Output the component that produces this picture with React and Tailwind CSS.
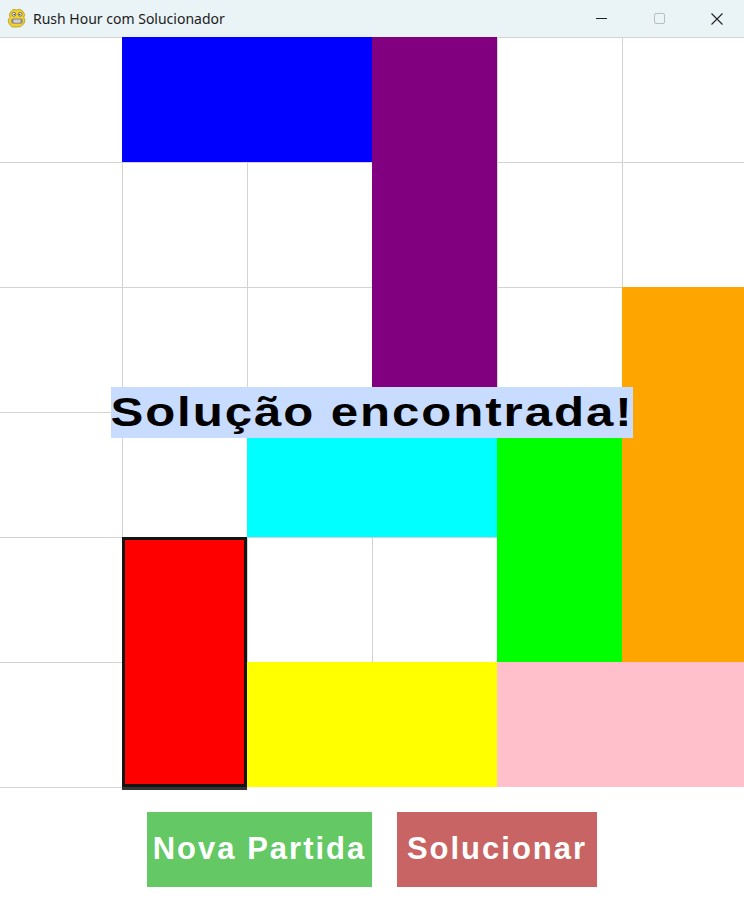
import React from "react";

// board pieces, placed on a 6x6 grid (125px cells)
const pieces = [
  { id: "blue", cls: "col-start-2 col-span-2 row-start-1 bg-[#0000ff]" },
  { id: "purple", cls: "col-start-4 row-start-1 row-span-3 bg-[#800080]" },
  { id: "orange", cls: "col-start-6 row-start-3 row-span-3 bg-[#ffa500]" },
  { id: "cyan", cls: "col-start-3 col-span-2 row-start-4 bg-[#00ffff]" },
  { id: "green", cls: "col-start-5 row-start-4 row-span-2 bg-[#00ff00]" },
  { id: "red", cls: "col-start-2 row-start-5 row-span-2 bg-[#ff0000] border-[3px] border-[#141414]" },
  { id: "yellow", cls: "col-start-3 col-span-2 row-start-6 bg-[#ffff00]" },
  { id: "pink", cls: "col-start-5 col-span-2 row-start-6 bg-[#ffc0cb]" },
];

// 36 cells minus 18 covered by pieces
const emptyCells = Array.from({ length: 18 }, (_, i) => i);

const PygameIcon = () => (
  <svg width="20" height="21" viewBox="0 0 19 20">
    <path d="M4 3 Q6 0 9 2 Q12 0 15 3 Q18 6 16 9 Q18 12 16 15 Q13 19 9 18 Q4 19 2 15 Q0 11 3 9 Q1 6 4 3Z" fill="#f2d233" stroke="#b89a10" strokeWidth="0.8" />
    <circle cx="6.5" cy="6" r="1.8" fill="#fff" stroke="#333" strokeWidth="0.6" />
    <circle cx="12.5" cy="6" r="1.8" fill="#fff" stroke="#333" strokeWidth="0.6" />
    <circle cx="6.8" cy="6.2" r="0.7" fill="#222" />
    <circle cx="12.2" cy="6.2" r="0.7" fill="#222" />
    <rect x="4" y="10" width="11" height="5" rx="2" fill="#8a8a8a" />
    <rect x="6" y="11" width="7" height="3" rx="1" fill="#cfcfcf" />
  </svg>
);

const TitleBar = () => (
  <div className="h-[37px] flex items-center bg-[#eaf3f6] font-['Noto_Sans','Open_Sans',sans-serif]">
    <div className="ml-[7px] mt-[-1px]">
      <PygameIcon />
    </div>
    <span className="ml-[6px] text-[14px] text-[#1b1b1b] mt-[-1px]">Rush Hour com Solucionador</span>
    <div className="ml-auto mr-[-2px] flex h-full">
      <div className="w-[58px] flex items-center justify-center">
        <div className="w-[11px] h-px bg-[#222]" />
      </div>
      <div className="w-[58px] flex items-center justify-center">
        <div className="w-[11px] h-[11px] border border-[#bdbdbd] rounded-[2px]" />
      </div>
      <div className="w-[58px] flex items-center justify-center">
        <svg width="12" height="12" viewBox="0 0 12 12">
          <path d="M0.5 0.5 L11.5 11.5 M11.5 0.5 L0.5 11.5" stroke="#222" strokeWidth="1.1" />
        </svg>
      </div>
    </div>
  </div>
);

const Board = () => (
  <div className="relative w-[750px] ml-[-3px]">
    <div className="grid grid-cols-[repeat(6,125px)] grid-rows-[repeat(6,125px)]">
      {pieces.map((p) => (
        <div key={p.id} className={p.cls} />
      ))}
      {emptyCells.map((i) => (
        <div key={i} className="border-l border-t border-[#d3d3d3] bg-white" />
      ))}
    </div>
    {/* message over the board */}
    <div className="absolute inset-0 flex items-center justify-center pointer-events-none">
      <div className="bg-[#c8dcff] h-[51px] w-[522px] flex items-center justify-center overflow-hidden">
        <span className="inline-block scale-x-[1.2] font-['Liberation_Sans',Arial,sans-serif] font-bold text-[41px] tracking-[1.6px] text-black leading-none whitespace-nowrap">
          Solução encontrada!
        </span>
      </div>
    </div>
  </div>
);

export default function App() {
  return (
    <div className="w-[744px] h-[908px] overflow-hidden bg-white">
      <TitleBar />
      <Board />
      <div className="flex ml-[-3px]">
        <div className="w-[125px] h-px bg-[#d3d3d3]" />
        <div className="w-[125px] h-[3px] bg-[#333]" />
      </div>
      <div className="w-[750px] ml-[-3px] mt-[22px] flex justify-center gap-[25px] font-['Liberation_Sans',Arial,sans-serif] font-bold text-white text-[31px] tracking-[2px]">
        <button className="w-[225px] h-[75px] bg-[#64c864] flex items-center justify-center">Nova Partida</button>
        <button className="w-[200px] h-[75px] bg-[#c86464] flex items-center justify-center">Solucionar</button>
      </div>
    </div>
  );
}
